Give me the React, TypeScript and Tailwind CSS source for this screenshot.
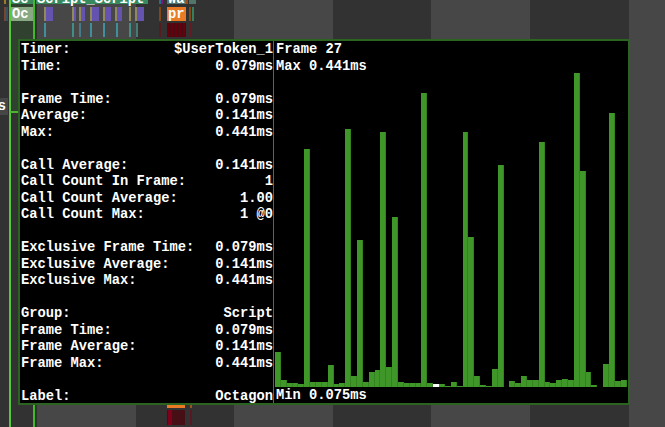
const rows: [string, string][] = [
  ["Timer:", "$UserToken_1"],
  ["Time:", "0.079ms"],
  ["", ""],
  ["Frame Time:", "0.079ms"],
  ["Average:", "0.141ms"],
  ["Max:", "0.441ms"],
  ["", ""],
  ["Call Average:", "0.141ms"],
  ["Call Count In Frame:", "1"],
  ["Call Count Average:", "1.00"],
  ["Call Count Max:", "1 @0"],
  ["", ""],
  ["Exclusive Frame Time:", "0.079ms"],
  ["Exclusive Average:", "0.141ms"],
  ["Exclusive Max:", "0.441ms"],
  ["", ""],
  ["Group:", "Script"],
  ["Frame Time:", "0.079ms"],
  ["Frame Average:", "0.141ms"],
  ["Frame Max:", "0.441ms"],
  ["", ""],
  ["Label:", "Octagon"],
];

// Bar heights in pixels, one per captured frame.
const samples = [
  35, 7, 4.3, 4, 3, 238, 5, 5, 5, 22, 3, 4.5, 258, 11, 147, 5, 15.5, 17.5, 255, 20,
  170, 5, 4, 4, 4, 294, 4, 3, 3, 1, 5, 1, 255, 150, 11.3, 1.7, 1, 18.3, 222, 0,
  5.7, 4, 11, 6.7, 7.3, 245, 5.3, 3.7, 6.7, 8.3, 7, 314, 216.5, 15.3, 2, 0, 23.3, 274, 5.7, 7.5,
];
const current = 27;

// A slice is its width, its colour and an optional caption; an empty colour is idle time.
type Slice = [number, string, string?];

const groups: Slice[] = [
  [4, ""], [2, "bg-[#9a7b28]"], [5, ""],
  [22, "bg-[#38895e]", "Sc"], [3, ""], [112, "bg-[#38895e]", "Script_Script"],
  [11, ""], [2, "bg-[#286c87]"], [2, "bg-[#7c177c]"], [4, ""],
  [19, "bg-[#4d7771]", "Wa"], [2, "bg-[#9b4d1c]"], [1, ""], [7, "bg-[#52756a]"],
];

const timers: Slice[] = [
  [4, ""], [2, "bg-[#7a4630]"], [2, "bg-[#345361]"], [3, ""],
  [22, "bg-[#89a884]", "Oc"], [11, ""],
  [2, "bg-[#90895a]"], [7, "bg-[#6553b0]"], [19, ""],
  [2, "bg-[#90895a]"], [2, "bg-[#6553b0]"], [3, ""],
  [2, "bg-[#90895a]"], [4, "bg-[#6553b0]"], [5, ""],
  [2, "bg-[#90895a]"], [7, "bg-[#6553b0]"], [4, ""],
  [2, "bg-[#90895a]"], [6, "bg-[#6553b0]"], [4, ""],
  [2, "bg-[#90895a]"], [5, "bg-[#6553b0]"], [7, ""],
  [2, "bg-[#90895a]"], [4, ""],
  [2, "bg-[#90895a]"], [7, "bg-[#6553b0]"], [15, ""],
  [2, "bg-[#81471b]"], [6, ""], [19, "bg-[#e97b26]", "pr"],
  [3, ""], [2, "bg-[#81471b]"], [1, ""], [2, "bg-[#34805c]"],
];

const calls: Slice[] = [
  [44, ""], [2, "bg-[#3f8f9c]"], [26, ""], [2, "bg-[#3f8f86]"], [5, ""],
  [2, "bg-[#447b86]"], [9, ""], [2, "bg-[#3f8f9c]"], [11, ""], [2, "bg-[#3f8f9c]"],
  [11, ""], [2, "bg-[#3f8f9c]"], [11, ""], [2, "bg-[#3f8f86]"], [5, ""],
  [2, "bg-[#447b76]"], [21, ""], [2, "bg-[#581b1d]"], [6, ""],
  [19, "bg-[repeating-linear-gradient(90deg,#65000c_0_2px,#480b11_2px_4px)]"],
  [4, ""], [1, "bg-[#641c24]"],
];

const laterTimers: Slice[] = [[167, ""], [18, "bg-[#e97b26]"], [5, ""], [2, "bg-[#98551f]"]];
const laterCalls: Slice[] = [
  [167, ""], [1, "bg-[#460e15]"], [4, "bg-[#800019]"], [13, "bg-[#460e15]"], [5, ""], [2, "bg-[#5b1720]"],
];

function Track({ slices, size, caption = "-mb-px" }: { slices: Slice[]; size: string; caption?: string }) {
  return (
    <div className={`flex shrink-0 ${size}`}>
      {slices.map(([width, color, text], i) => (
        <div key={i} className={`flex shrink-0 items-end whitespace-pre pl-px ${color}`} style={{ width }}>
          {text && <span className={`leading-[14px] ${caption}`}>{text}</span>}
        </div>
      ))}
    </div>
  );
}

function Stripes() {
  return (
    <div className="absolute inset-0 flex">
      <div className="w-[37px] shrink-0" />
      {[0, 1, 2, 3].map((i) => (
        <div key={i} className="flex w-[197.2px] shrink-0">
          <div className="w-[98.6px] bg-[#474747]" />
        </div>
      ))}
    </div>
  );
}

function Tooltip() {
  return (
    <section className="absolute left-[18px] top-[39px] flex h-[366px] w-[612px] border-2 border-[#2b6320] bg-black">
      <div className="flex w-[253px] shrink-0 flex-col pl-px pt-px">
        {rows.map(([label, value], i) => (
          <div key={i} className="flex h-[16.5px] shrink-0 justify-between whitespace-pre leading-[16.5px]">
            <span>{label}</span>
            <span>{value}</span>
          </div>
        ))}
      </div>
      <div className="w-px shrink-0 bg-[#338223]" />
      <div className="flex flex-1 flex-col pl-[2px] pt-px">
        <div className="h-[16.5px] leading-[16.5px]">Frame 27</div>
        <div className="h-[16.5px] leading-[16.5px]">Max 0.441ms</div>
        <div className="-ml-px flex h-[312px] w-[352.2px] shrink-0 items-end">
          {samples.map((height, i) => (
            <div
              key={i}
              className={
                i === current
                  ? "w-[5.87px] shrink-0 bg-white"
                  : "w-[5.87px] shrink-0 border-r border-[#35831f] bg-[#3f9629]"
              }
              style={{ height }}
            />
          ))}
        </div>
        <div className="pt-px leading-[16.5px]">Min 0.075ms</div>
      </div>
    </section>
  );
}

export default function App() {
  return (
    <main className="relative h-[427px] w-[665px] overflow-hidden bg-[#323232] font-['Liberation_Mono',monospace] text-[13.75px] font-bold text-white">
      <Stripes />
      <div className="absolute left-[10px] top-0 h-[112px] w-[23px] bg-[#30422f]" />
      <div className="relative flex h-full flex-col justify-between">
        <div className="flex flex-col">
          <Track slices={groups} size="h-[4px]" caption="-mb-[3px]" />
          <div className="flex flex-col gap-[2px] pt-[3px]">
            <Track slices={timers} size="h-[14px]" />
            <Track slices={calls} size="h-[14px]" />
          </div>
          <div className="flex pt-[61px]">
            <div className="flex h-[17px] w-[8px] justify-end bg-[#464646] pr-[2px] leading-[18px]">s</div>
          </div>
        </div>
        <div className="flex flex-col gap-[2px] pb-[2px]">
          <Track slices={laterTimers} size="h-[4px]" />
          <Track slices={laterCalls} size="h-[15px]" />
        </div>
      </div>
      <div className="absolute inset-y-0 left-[9px] w-[2px] bg-[#55c936]" />
      <div className="absolute inset-y-0 left-[33px] w-[2px] bg-[#43b925]" />
      <div className="absolute left-[10px] top-[111px] h-[2px] w-[9px] bg-[#4bb52f]" />
      <Tooltip />
    </main>
  );
}
